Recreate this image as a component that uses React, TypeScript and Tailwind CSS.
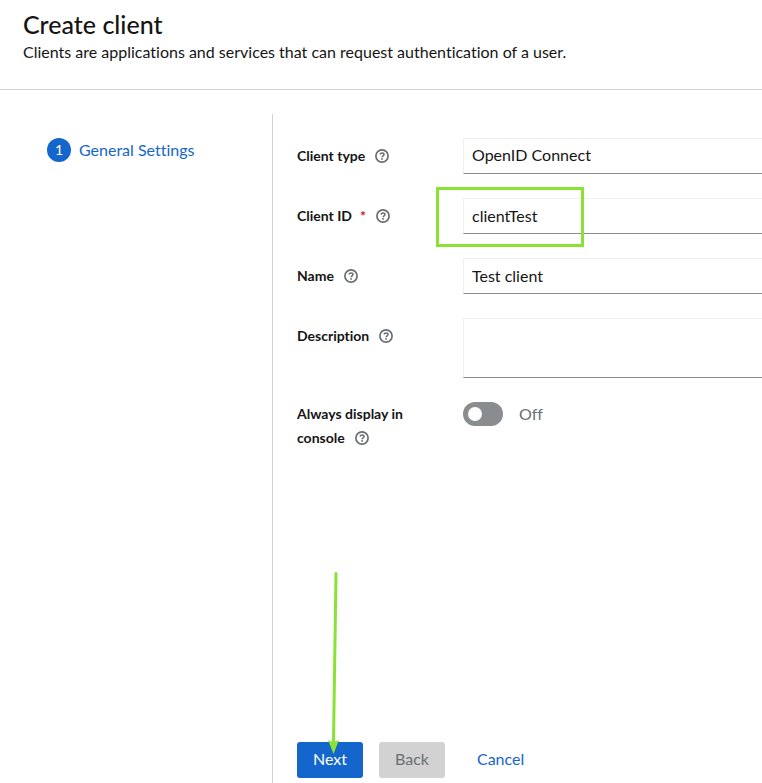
import { useState } from 'react'
import type { ReactNode } from 'react'

const fieldClass =
  "block w-full rounded-none border-t border-b border-l border-t-[#f0f0f0] border-b-[#8a8d90] border-l-[#f0f0f0] bg-white px-2 pb-0.5 text-[16px] leading-6 text-[#151515] outline-none"

function Help({ topic }: { topic: string }) {
  return (
    <button type="button" aria-label={`More info for ${topic}`} className="ml-2.5 inline-block align-[-2px] text-[#6a6e73]">
      <svg viewBox="0 0 14 14" fill="none" stroke="currentColor" className="size-[14px]">
        <circle cx="7" cy="7" r="6.100" strokeWidth="1.700" />
        <path d="M5 5.500C5.300 4.500 6 4.100 7 4.100c1.200 0 2 .6 2 1.500 0 1.300-1.900 1.300-1.900 2.600" strokeWidth="1.500" />
        <circle cx="7.050" cy="9.900" r=".95" fill="currentColor" stroke="none" />
      </svg>
    </button>
  )
}

function Row({ id, label, required, children }: { id: string; label: string; required?: boolean; children: ReactNode }) {
  return (
    <div className="grid grid-cols-[150px_minmax(0,1fr)] gap-4">
      <div className="pt-1.5 text-[14px] leading-6 font-bold">
        <label htmlFor={id}>
          {label}
          {required && <span className="ml-2 text-[#c9190b]">*</span>}
        </label>
        <Help topic={label} />
      </div>
      <div className="relative">{children}</div>
    </div>
  )
}

export default function App() {
  const [type, setType] = useState('openid-connect')
  const [clientId, setClientId] = useState('clientTest')
  const [name, setName] = useState('Test client')
  const [description, setDescription] = useState('')
  const [always, setAlways] = useState(false)

  return (
    <div className="flex min-h-screen flex-col overflow-hidden bg-white font-['Lato',sans-serif] text-[16px] leading-6 text-[#151515] [font-variant-ligatures:none]">
      <header className="border-b border-[#d2d2d2] px-[23px] pt-[9px] pb-[25px]">
        <h1 className="text-[25px] leading-[31px] font-medium">Create client</h1>
        <p>Clients are applications and services that can request authentication of a user.</p>
      </header>

      <div className="flex flex-1 pt-6">
        <nav aria-label="Wizard steps" className="w-[273px] shrink-0 border-r border-[#d2d2d2] px-[47px] pt-6">
          <ol>
            <li>
              <a href="#general" aria-current="step" className="flex items-center gap-2 text-[#1466cc]">
                <span className="flex size-6 items-center justify-center rounded-full bg-[#1466cc] text-[14px] text-white">1</span>
                General Settings
              </a>
            </li>
          </ol>
        </nav>

        <form className="flex min-w-0 flex-1 flex-col justify-between pt-6 pb-[5px] pl-6" onSubmit={(e) => e.preventDefault()}>
          <div className="flex flex-col gap-6">
            <Row id="type" label="Client type">
              <select id="type" value={type} onChange={(e) => setType(e.target.value)} className={`${fieldClass} h-9 appearance-none`}>
                <option value="openid-connect">OpenID Connect</option>
              </select>
            </Row>
            <Row id="client-id" label="Client ID" required>
              <input id="client-id" value={clientId} onChange={(e) => setClientId(e.target.value)} className={`${fieldClass} h-9`} />
              <div className="pointer-events-none absolute -top-[11px] -left-[27px] h-[60px] w-[148px] border-[3px] border-[#8ae234]" />
            </Row>
            <Row id="name" label="Name">
              <input id="name" value={name} onChange={(e) => setName(e.target.value)} className={`${fieldClass} h-9`} />
            </Row>
            <Row id="description" label="Description">
              <textarea id="description" value={description} onChange={(e) => setDescription(e.target.value)} className={`${fieldClass} h-[60px] resize-none`} />
            </Row>
            <div className="grid grid-cols-[150px_minmax(0,1fr)] gap-4">
              <div className="text-[14px] leading-6 font-bold">
                <label htmlFor="always">Always display in console</label>
                <Help topic="Always display in console" />
              </div>
              <label className="flex items-center gap-4 self-start text-[#6a6e73]">
                <input
                  id="always"
                  type="checkbox"
                  role="switch"
                  checked={always}
                  onChange={(e) => setAlways(e.target.checked)}
                  className="h-6 w-10 appearance-none rounded-full bg-[#8a8d90] before:mt-[5px] before:ml-[5px] before:block before:size-[14px] before:rounded-full before:bg-white before:content-[''] checked:bg-[#1466cc] checked:before:ml-[21px]"
                />
                {always ? 'On' : 'Off'}
              </label>
            </div>
          </div>

          <footer className="relative flex gap-4">
            <button type="submit" className="h-9 rounded-[3px] bg-[#1466cc] px-4 pb-0.5 text-white">Next</button>
            <button type="button" disabled className="h-9 rounded-[3px] bg-[#d2d2d2] px-4 pb-0.5 text-[#6a6e73]">Back</button>
            <button type="button" className="h-9 px-4 pb-0.5 text-[#1466cc]">Cancel</button>
            <svg aria-hidden="true" viewBox="0 0 16 184" className="pointer-events-none absolute bottom-6 left-7 h-[184px] w-4">
              <path d="M11 3.500 8.500 172" stroke="#8ae234" strokeWidth="3" strokeLinecap="round" />
              <path d="M3 170 8.500 184 14 170 8.500 172Z" fill="#8ae234" />
            </svg>
          </footer>
        </form>
      </div>
    </div>
  )
}
